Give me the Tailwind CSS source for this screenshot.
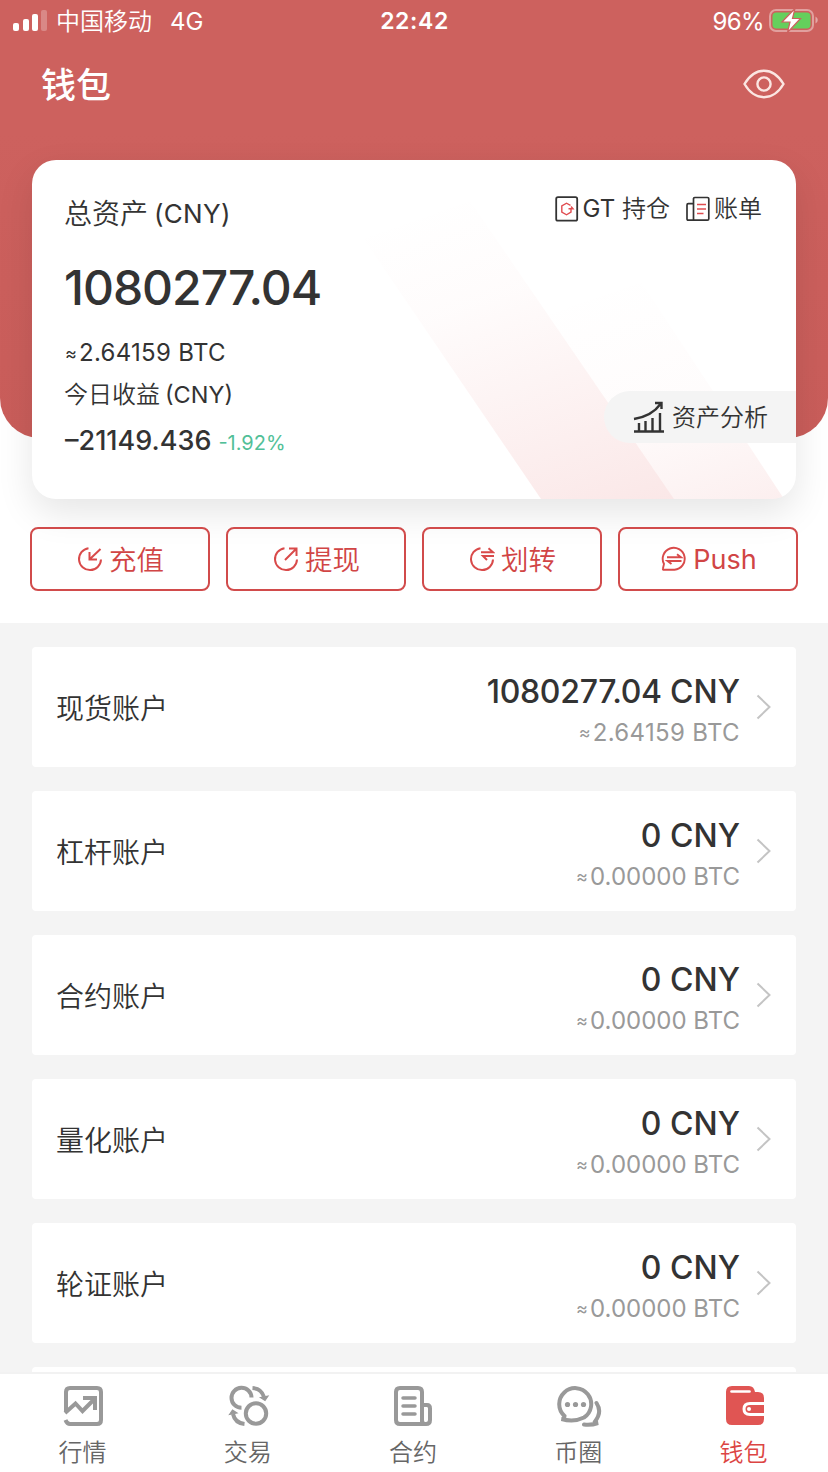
<!DOCTYPE html>
<html lang="zh-CN">
<head>
<meta charset="utf-8">
<title>钱包</title>
<script src="https://cdn.jsdelivr.net/npm/@tailwindcss/browser@4"></script>
</head>
<body class="bg-[#f4f4f4]">
<div class="flex h-[1472px] w-[828px] flex-col overflow-hidden bg-[#f4f4f4] font-['Inter','Noto_Sans_CJK_SC',sans-serif] text-[#333]">

  <section class="h-[623px] shrink-0 bg-white">
    <header class="h-[438px] rounded-b-[40px] bg-linear-to-b from-[#cd615e] from-30% to-[#c95d5a] text-white">
      <div class="grid h-10 grid-cols-[1fr_auto_1fr] items-center pl-[13px] pr-[10px] pt-[3px] text-[24px]">
        <div class="flex items-center">
          <svg class="-mt-[2px] h-[22px] w-[36px]" viewBox="0 0 36 22" fill="#fff"><rect x="0" y="13" width="6" height="8" rx="2"/><rect x="10" y="9" width="6" height="12" rx="2"/><rect x="19" y="4" width="6" height="17" rx="2"/><rect x="28" y="0" width="6" height="21" rx="2" opacity=".25"/></svg>
          <span class="ml-[7px] font-[350]">中国移动</span><span class="ml-[18px]">4G</span>
        </div>
        <span class="relative -left-px text-[23px] font-semibold tracking-[0.6px]">22:42</span>
        <div class="flex items-center justify-end">
          <span class="tracking-[-0.6px]">96%</span>
          <svg class="-mt-[3px] ml-[5px] h-[26px] w-[49px]" viewBox="0 0 49 26"><rect x="1" y="3" width="43" height="21" rx="6" fill="none" stroke="#fff" stroke-opacity=".4" stroke-width="2"/><rect x="3.500" y="5.500" width="38" height="16" rx="4" fill="#65cf5c"/><path d="M46.500 9.500v7q2.300-1 2.300-3.500t-2.300-3.500z" fill="#fff" opacity=".45"/><path d="M26 1.500 13 15h8L18.500 25.500 31.500 11.500h-8z" fill="#fff" stroke="#cd615e" stroke-width="1.200"/></svg>
        </div>
      </div>
      <div class="flex h-[88px] items-center justify-between pl-[41px] pr-[43px]">
        <h1 class="pt-[2px] text-[35px] font-medium">钱包</h1>
        <svg class="h-[30px] w-[42px]" viewBox="0 0 42 30" fill="none" stroke="#fbe6e2" stroke-width="2.400"><path d="M1.500 15C6.500 6.500 12.500 1.700 21 1.700S35.500 6.500 40.500 15C35.500 23.500 29.500 28.200 21 28.200S6.500 23.500 1.500 15z"/><circle cx="21" cy="15" r="6.600"/></svg>
      </div>
    </header>

    <div class="relative mx-8 -mt-[278px] h-[339px] overflow-hidden rounded-[24px] bg-white shadow-[0_14px_36px_rgba(0,0,0,0.1)]">
      <svg class="absolute inset-0 h-full w-full" viewBox="0 0 764 339">
        <defs>
          <linearGradient id="g1" x1="410" y1="40" x2="530" y2="380" gradientUnits="userSpaceOnUse"><stop offset="0" stop-color="#e05555" stop-opacity="0"/><stop offset=".3" stop-color="#e05555" stop-opacity=".02"/><stop offset="1" stop-color="#e05555" stop-opacity=".14"/></linearGradient>
          <linearGradient id="g2" x1="600" y1="110" x2="690" y2="370" gradientUnits="userSpaceOnUse"><stop offset="0" stop-color="#e05555" stop-opacity="0"/><stop offset=".5" stop-color="#e05555" stop-opacity=".018"/><stop offset="1" stop-color="#e05555" stop-opacity=".1"/></linearGradient>
        </defs>
        <path d="M278 0h132l232 339H509z" fill="url(#g1)"/><path d="M480 102l120 6 152 231H642z" fill="url(#g2)"/>
      </svg>
      <div class="relative flex h-full flex-col pl-[32px]">
        <div class="flex items-start justify-between pr-[34px]">
          <div class="mt-[33px] flex h-10 items-center"><span class="pt-px text-[28px] font-[350]">总资产</span><span class="ml-[6px] text-[26px] tracking-[0.3px]">(CNY)</span></div>
          <div class="mt-[29px] flex h-10 items-center text-[24px]">
            <svg class="-mt-px h-[26px] w-[24px]" viewBox="0 0 24 26" fill="none"><rect x="1.200" y="1.200" width="21" height="23.500" rx="1.800" stroke="#333" stroke-width="1.800"/><path d="M15.500 9.300 11.500 7.200 6.800 10v6l4.700 2.800 4.500-2.800v-3M13.500 12.700h4.500l-2-2.200" stroke="#e04c50" stroke-width="1.400"/></svg>
            <span class="ml-[4px]">GT <span class="font-[350]">持仓</span></span>
            <svg class="-mt-px ml-[16px] h-[26px] w-[24px]" viewBox="0 0 24 26" fill="none"><path d="M7.500 24.200V2.800q0-1.300 1.300-1.300h12.700q1.300 0 1.300 1.300v20q0 1.400-1.300 1.400H2.300Q1 24.200 1 22.800V9q0-1.300 1.300-1.300h5.200" stroke="#333" stroke-width="1.700"/><path d="M11 8.500h9M11 13h9M11 17.500h6.500" stroke="#e04c50" stroke-width="1.500"/></svg>
            <span class="ml-[4px] font-[350]">账单</span>
          </div>
        </div>
        <div class="mt-[25px] flex h-[60px] items-center text-[48px] font-medium tracking-[-1px]">1080277.04</div>
        <div class="mt-[20px] flex h-[30px] items-center pl-px text-[24px] tracking-[0.3px]"><span class="w-[14px] text-[18px]">≈</span>2.64159 BTC</div>
        <div class="mt-[12px] flex h-[30px] items-center text-[24px]"><span class="font-[350]">今日收益</span><span class="ml-[5px] text-[23.500px]">(CNY)</span></div>
        <div class="mt-[15px] flex h-[32px] items-center pl-px text-[27px] font-medium"><span>–21149.436</span><span class="ml-[7px] mt-[4px] text-[20px] font-normal text-[#52bf98]">-1.92%</span></div>
        <div class="absolute right-0 top-[231px] flex h-[52px] w-[192px] items-center rounded-l-full bg-[#f4f4f4] pl-[29px] text-[24px]">
          <svg class="h-[32px] w-[32px]" viewBox="0 0 32 32" fill="none" stroke="#333" stroke-width="2.400"><path d="M1 30.500h30M6 30v-8M12.500 30V20M19.500 30V17M27 30V12M1 18Q19 15 27.500 3M22 2h6.500v6"/></svg>
          <span class="ml-[7px] pt-[2px] font-[350]">资产分析</span>
        </div>
      </div>
    </div>

    <div class="grid grid-cols-4 gap-4 px-[30px] pt-[28px] text-[27.500px] text-[#d14545]">
      <button class="relative flex h-16 items-center justify-center rounded-[8px] border-2 border-[#d14b4b]">
        <svg class="mr-[6px] h-[26px] w-[26px]" viewBox="0 0 26 26" fill="none" stroke="#d94a4a" stroke-width="2"><path d="M11.500 2.200A11 11 0 1 0 24 13.500M23.500 3 13.500 12.500M12.500 6v7.500H20"/></svg><span class="-mr-px pt-[3px] font-[350]">充值</span></button>
      <button class="relative flex h-16 items-center justify-center rounded-[8px] border-2 border-[#d14b4b]">
        <svg class="mr-[6px] h-[26px] w-[26px]" viewBox="0 0 26 26" fill="none" stroke="#d94a4a" stroke-width="2"><path d="M11.500 2.200A11 11 0 1 0 24 13.500M12 14 23 3M16 2.500h7.500V10"/></svg><span class="-mr-px pt-[3px] font-[350]">提现</span></button>
      <button class="relative flex h-16 items-center justify-center rounded-[8px] border-2 border-[#d14b4b]">
        <svg class="mr-[6px] h-[26px] w-[26px]" viewBox="0 0 26 26" fill="none" stroke="#d94a4a" stroke-width="2"><path d="M11.500 2.200A11 11 0 1 0 24 13.500M12 6.200h12l-4.500-4M25 10H14l4 4"/></svg><span class="-mr-px pt-[3px] font-[350]">划转</span></button>
      <button class="relative flex h-16 items-center justify-center rounded-[8px] border-2 border-[#d14b4b]">
        <svg class="mr-[6px] h-[26px] w-[26px]" viewBox="0 0 26 26" fill="none" stroke="#d94a4a" stroke-width="1.900"><path d="M3 18A11 11 0 1 1 13.500 23.800H3q-1.500 0-1-1.600z"/><path d="M6 11.200h14l-4-3M20.500 15H6.500l4 3"/></svg><span class="-mr-[2px] pt-[3px] text-[27px]">Push</span></button>
    </div>
  </section>

  <main class="flex min-h-0 grow flex-col gap-6 overflow-hidden px-8 pt-6">
    <article class="flex h-[120px] shrink-0 items-center rounded-[4px] bg-white pl-[24px] pr-[25px]"><span class="grow pt-[3px] text-[28px] font-[350]">现货账户</span><div class="flex flex-col items-end pt-[10px]"><div class="text-[32px] font-medium leading-[42px] tracking-[-0.3px]">1080277.04 <span class="tracking-normal">CNY</span></div><div class="flex items-center text-[24px] leading-[40px] tracking-[0.35px] text-[#999]"><span class="w-[14px] text-[18px]">≈</span>2.64159 BTC</div></div><svg class="ml-[16px] h-[26px] w-[15px]" viewBox="0 0 15 26" fill="none" stroke="#c4c4c4" stroke-width="2"><path d="m1.500 1.500 12 11.500-12 11.500"/></svg></article>
    <article class="flex h-[120px] shrink-0 items-center rounded-[4px] bg-white pl-[24px] pr-[25px]"><span class="grow pt-[3px] text-[28px] font-[350]">杠杆账户</span><div class="flex flex-col items-end pt-[10px]"><div class="text-[32px] font-medium leading-[42px]">0 CNY</div><div class="flex items-center text-[24px] leading-[40px] text-[#999]"><span class="w-[14px] text-[18px]">≈</span>0.00000 BTC</div></div><svg class="ml-[16px] h-[26px] w-[15px]" viewBox="0 0 15 26" fill="none" stroke="#c4c4c4" stroke-width="2"><path d="m1.500 1.500 12 11.500-12 11.500"/></svg></article>
    <article class="flex h-[120px] shrink-0 items-center rounded-[4px] bg-white pl-[24px] pr-[25px]"><span class="grow pt-[3px] text-[28px] font-[350]">合约账户</span><div class="flex flex-col items-end pt-[10px]"><div class="text-[32px] font-medium leading-[42px]">0 CNY</div><div class="flex items-center text-[24px] leading-[40px] text-[#999]"><span class="w-[14px] text-[18px]">≈</span>0.00000 BTC</div></div><svg class="ml-[16px] h-[26px] w-[15px]" viewBox="0 0 15 26" fill="none" stroke="#c4c4c4" stroke-width="2"><path d="m1.500 1.500 12 11.500-12 11.500"/></svg></article>
    <article class="flex h-[120px] shrink-0 items-center rounded-[4px] bg-white pl-[24px] pr-[25px]"><span class="grow pt-[3px] text-[28px] font-[350]">量化账户</span><div class="flex flex-col items-end pt-[10px]"><div class="text-[32px] font-medium leading-[42px]">0 CNY</div><div class="flex items-center text-[24px] leading-[40px] text-[#999]"><span class="w-[14px] text-[18px]">≈</span>0.00000 BTC</div></div><svg class="ml-[16px] h-[26px] w-[15px]" viewBox="0 0 15 26" fill="none" stroke="#c4c4c4" stroke-width="2"><path d="m1.500 1.500 12 11.500-12 11.500"/></svg></article>
    <article class="flex h-[120px] shrink-0 items-center rounded-[4px] bg-white pl-[24px] pr-[25px]"><span class="grow pt-[3px] text-[28px] font-[350]">轮证账户</span><div class="flex flex-col items-end pt-[10px]"><div class="text-[32px] font-medium leading-[42px]">0 CNY</div><div class="flex items-center text-[24px] leading-[40px] text-[#999]"><span class="w-[14px] text-[18px]">≈</span>0.00000 BTC</div></div><svg class="ml-[16px] h-[26px] w-[15px]" viewBox="0 0 15 26" fill="none" stroke="#c4c4c4" stroke-width="2"><path d="m1.500 1.500 12 11.500-12 11.500"/></svg></article>
    <article class="h-[120px] shrink-0 rounded-[4px] bg-white"></article>
  </main>

  <nav class="grid h-[100px] shrink-0 grid-cols-5 border-t-2 border-[#f2f2f2] bg-white pr-[2px] text-[24px] font-[350] text-[#666]">
    <a class="flex flex-col items-center pt-[9px]"><svg class="h-[44px] w-[44px]" viewBox="0 0 44 44" fill="none" stroke="#999" stroke-width="4"><path d="M5 28V9q0-4 4-4h27q4 0 4 4v28q0 4-4 4H9q-3 0-4.500-4M4 30l10.500-9.500L21.500 28 33.500 16M22 15h12v12"/></svg><span class="mt-[8px] leading-[36px]">行情</span></a>
    <a class="flex flex-col items-center pt-[9px]"><svg class="h-[44px] w-[44px]" viewBox="0 0 44 44" fill="none" stroke="#999" stroke-width="4"><path d="M15.500 24.800A10 10 0 1 1 25.500 14.500"/><circle cx="30" cy="30.500" r="10.200"/><path d="M26.500 5q9 .5 11.500 9M18.500 41Q9 40 7 31"/><path d="m34.500 14.500 7.500-1.500-3 4.500zM3.500 31.500l3-4.500 4.500 3z" fill="#999" stroke-width="1.200"/></svg><span class="mt-[8px] leading-[36px]">交易</span></a>
    <a class="flex flex-col items-center pt-[9px]"><svg class="h-[44px] w-[44px]" viewBox="0 0 44 44" fill="none" stroke="#999" stroke-width="4"><path d="M31 41V9q0-4-4-4H9Q5 5 5 9v28q0 4 4 4h26q4 0 4-4V25.500q0-3.500-3-3.500h-5M31 37q0 4 3 4"/><path d="M12 15h12M12 23h12M12 31h12" stroke-linecap="round" stroke-width="3.500"/></svg><span class="mt-[8px] leading-[36px]">合约</span></a>
    <a class="flex flex-col items-center pt-[9px]"><svg class="h-[44px] w-[48px]" viewBox="0 0 48 44" fill="none" stroke="#999" stroke-width="4" stroke-linecap="round"><path d="M10.500 33A16 16 0 1 1 30 34.500Q20 39.500 7.500 36q3 0 3-3zM42.500 20q6 9-1.500 18.500 1 1.500 3 1.500-7 2.500-14 1.500"/><g fill="#999" stroke="none"><circle cx="13.500" cy="21.500" r="2.600"/><circle cx="21.500" cy="21.500" r="2.600"/><circle cx="29.500" cy="21.500" r="2.600"/></g></svg><span class="mt-[8px] leading-[36px]">币圈</span></a>
    <a class="flex flex-col items-center pt-[9px] text-[#dc4543]"><svg class="ml-[2px] h-[44px] w-[44px]" viewBox="0 0 44 44"><path d="M4 9q0-6 6-6h17q5 0 6 6h3q6 0 6 6v21q0 6-6 6H10q-6 0-6-6z" fill="#e05553"/><path d="M9.500 8.500h18" stroke="#fff" stroke-width="2.600" stroke-linecap="round"/><path d="M42 20.500H28q-6 0-6 5.500t6 5.500h14" fill="none" stroke="#fff" stroke-width="3"/><circle cx="27" cy="26" r="2" fill="#fff"/></svg><span class="mt-[8px] leading-[36px]">钱包</span></a>
  </nav>
</div>
</body>
</html>
